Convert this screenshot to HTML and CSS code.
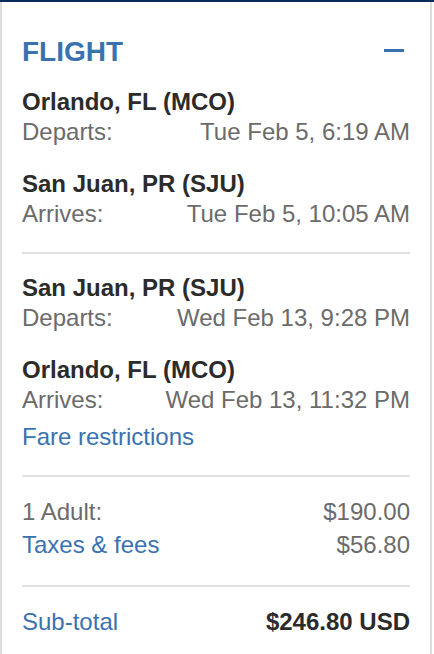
FILE: index.html
```html
<!DOCTYPE html>
<html lang="en">
<head>
<meta charset="utf-8">
<title>Flight summary</title>
<link rel="stylesheet" href="styles.css">
</head>
<body>
<div class="top-bar"></div>
<section class="panel">
  <header class="panel-header">
    <h2 class="panel-title">FLIGHT</h2>
    <span class="toggle" aria-label="Collapse"></span>
  </header>

  <div class="segment first">
    <div class="city">Orlando, FL (MCO)</div>
    <div class="row"><span class="label">Departs:</span><span class="value">Tue Feb 5, 6:19 AM</span></div>
  </div>
  <div class="segment">
    <div class="city">San Juan, PR (SJU)</div>
    <div class="row"><span class="label">Arrives:</span><span class="value">Tue Feb 5, 10:05 AM</span></div>
  </div>

  <hr class="divider d1">

  <div class="segment return">
    <div class="city">San Juan, PR (SJU)</div>
    <div class="row"><span class="label">Departs:</span><span class="value">Wed Feb 13, 9:28 PM</span></div>
  </div>
  <div class="segment">
    <div class="city">Orlando, FL (MCO)</div>
    <div class="row"><span class="label">Arrives:</span><span class="value">Wed Feb 13, 11:32 PM</span></div>
  </div>

  <a class="link fare" href="#">Fare restrictions</a>

  <hr class="divider d2">

  <div class="row price first-price"><span class="label">1 Adult:</span><span class="value">$190.00</span></div>
  <div class="row price taxes"><a class="link" href="#">Taxes &amp; fees</a><span class="value">$56.80</span></div>

  <hr class="divider d3">

  <div class="row total"><a class="link" href="#">Sub-total</a><span class="total-value">$246.80 USD</span></div>
</section>
</body>
</html>
```

FILE: styles.css
```css
html, body {
  margin: 0;
  padding: 0;
  background: #ffffff;
}

body {
  font-family: "Liberation Sans", Arial, Helvetica, sans-serif;
  font-size: 24px;
  line-height: 30px;
  color: #333333;
}

.top-bar {
  height: 2px;
  background: #0c2a5b;
}

.panel {
  width: 388px;
  min-height: 652px;
  box-sizing: border-box;
  width: 432px;
  padding: 33px 20px 0 20px;
  border-left: 2px solid #dddddd;
  border-right: 2px solid #dddddd;
}

.panel-header {
  display: flex;
  justify-content: space-between;
  align-items: flex-start;
  height: 34px;
}

.panel-title {
  margin: 0;
  font-size: 28px;
  line-height: 34px;
  font-weight: bold;
  color: #3a72b0;
}

.toggle {
  display: block;
  width: 20px;
  height: 3px;
  margin-top: 14px;
  margin-right: 6px;
  background: #3a72b0;
}

.segment {
  margin-top: 22px;
}

.segment.first {
  margin-top: 18px;
}

.segment.return {
  margin-top: 19px;
}

.city {
  font-weight: bold;
  color: #2b2b2b;
}

.row {
  display: flex;
  justify-content: space-between;
}

.label,
.value {
  color: #6b6b6b;
}

.link {
  color: #3a72b0;
  text-decoration: none;
}

.fare {
  display: block;
  margin-top: 7px;
}

.divider {
  border: 0;
  height: 2px;
  background: #e0e0e0;
  margin: 23px 0 0 0;
}

.d3 {
  margin-top: 25px;
}

.first-price {
  margin-top: 20px;
}

.taxes {
  margin-top: 3px;
}

.total {
  margin-top: 20px;
}

.total-value {
  font-weight: bold;
  color: #2b2b2b;
}
```
